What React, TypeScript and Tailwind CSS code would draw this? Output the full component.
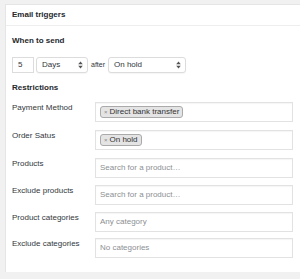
import React from 'react';

const font = { fontFamily: '"Liberation Sans", Arial, sans-serif' };

function Arrows() {
  return (
    <svg width="5" height="8" viewBox="0 0 5 8" className="shrink-0">
      <path d="M2.5 0.5 L4.8 3.3 L0.2 3.3 Z" fill="#555" />
      <path d="M2.5 7.5 L4.8 4.7 L0.2 4.7 Z" fill="#555" />
    </svg>
  );
}

function Select({ label, className }: { label: string; className: string }) {
  return (
    <div
      className={`h-[16px] flex items-center justify-between border border-[#dcdcdc] rounded-[3px] bg-white pl-[5px] pr-[4px] text-[8px] text-[#32373c] shadow-[0_1px_1px_rgba(0,0,0,0.04)] ${className}`}
    >
      <span>{label}</span>
      <Arrows />
    </div>
  );
}

function Chip({ label }: { label: string }) {
  return (
    <span className="h-[12px] inline-flex items-center gap-[2px] border border-[#aaa] bg-[#e4e4e4] rounded-[3px] px-[3px] text-[8px] text-[#333] leading-none">
      <span className="text-[6px] text-[#888]">×</span>
      {label}
    </span>
  );
}

function Field({ children }: { children: React.ReactNode }) {
  return (
    <div className="h-[20px] flex-1 flex items-center border border-[#e2e2e2] bg-white px-[4px] shadow-[inset_0_1px_1px_rgba(0,0,0,0.04)]">
      {children}
    </div>
  );
}

function Row({ label, mt, children }: { label: string; mt: string; children: React.ReactNode }) {
  return (
    <div className={`flex ${mt}`}>
      <div className="w-[83px] shrink-0 pt-[1px] text-[8px] leading-[10px] text-[#32373c]">{label}</div>
      {children}
    </div>
  );
}

export default function App() {
  return (
    <div className="w-[300px] h-[279px] bg-[#f1f1f1] overflow-hidden" style={font}>
      <div className="mt-[4px] ml-[5px] w-[295px] h-[268px] bg-white border-l border-t border-[#e5e5e5]">
        {/* Header */}
        <div className="h-[21px] flex items-center px-[6px] border-b border-[#eee]">
          <span className="text-[8px] font-bold text-[#23282d]">Email triggers</span>
        </div>

        <div className="pl-[6px] pr-[7px]">
          <div className="mt-[10px] h-[10px] text-[8px] font-bold leading-[10px] text-[#23282d]">When to send</div>

          <div className="mt-[11px] flex items-center">
            <div className="w-[22px] h-[16px] flex items-center border border-[#dcdcdc] pl-[5px] text-[8px] text-[#32373c]">5</div>
            <Select label="Days" className="ml-[2px] w-[52px]" />
            <span className="ml-[3px] text-[7px] text-[#32373c]">after</span>
            <Select label="On hold" className="ml-[3px] w-[78px]" />
          </div>

          <div className="mt-[10px] h-[10px] text-[8px] font-bold leading-[10px] text-[#23282d]">Restrictions</div>

          <Row label="Payment Method" mt="mt-[9px]">
            <Field>
              <Chip label="Direct bank transfer" />
            </Field>
          </Row>
          <Row label="Order Satus" mt="mt-[8px]">
            <Field>
              <Chip label="On hold" />
            </Field>
          </Row>
          <Row label="Products" mt="mt-[8px]">
            <Field>
              <span className="text-[8px] text-[#8c8f94]">Search for a product…</span>
            </Field>
          </Row>
          <Row label="Exclude products" mt="mt-[7px]">
            <Field>
              <span className="text-[8px] text-[#8c8f94]">Search for a product…</span>
            </Field>
          </Row>
          <Row label="Product categories" mt="mt-[7px]">
            <Field>
              <span className="text-[8px] text-[#8c8f94]">Any category</span>
            </Field>
          </Row>
          <Row label="Exclude categories" mt="mt-[6px]">
            <Field>
              <span className="text-[8px] text-[#8c8f94]">No categories</span>
            </Field>
          </Row>
        </div>
      </div>
    </div>
  );
}
